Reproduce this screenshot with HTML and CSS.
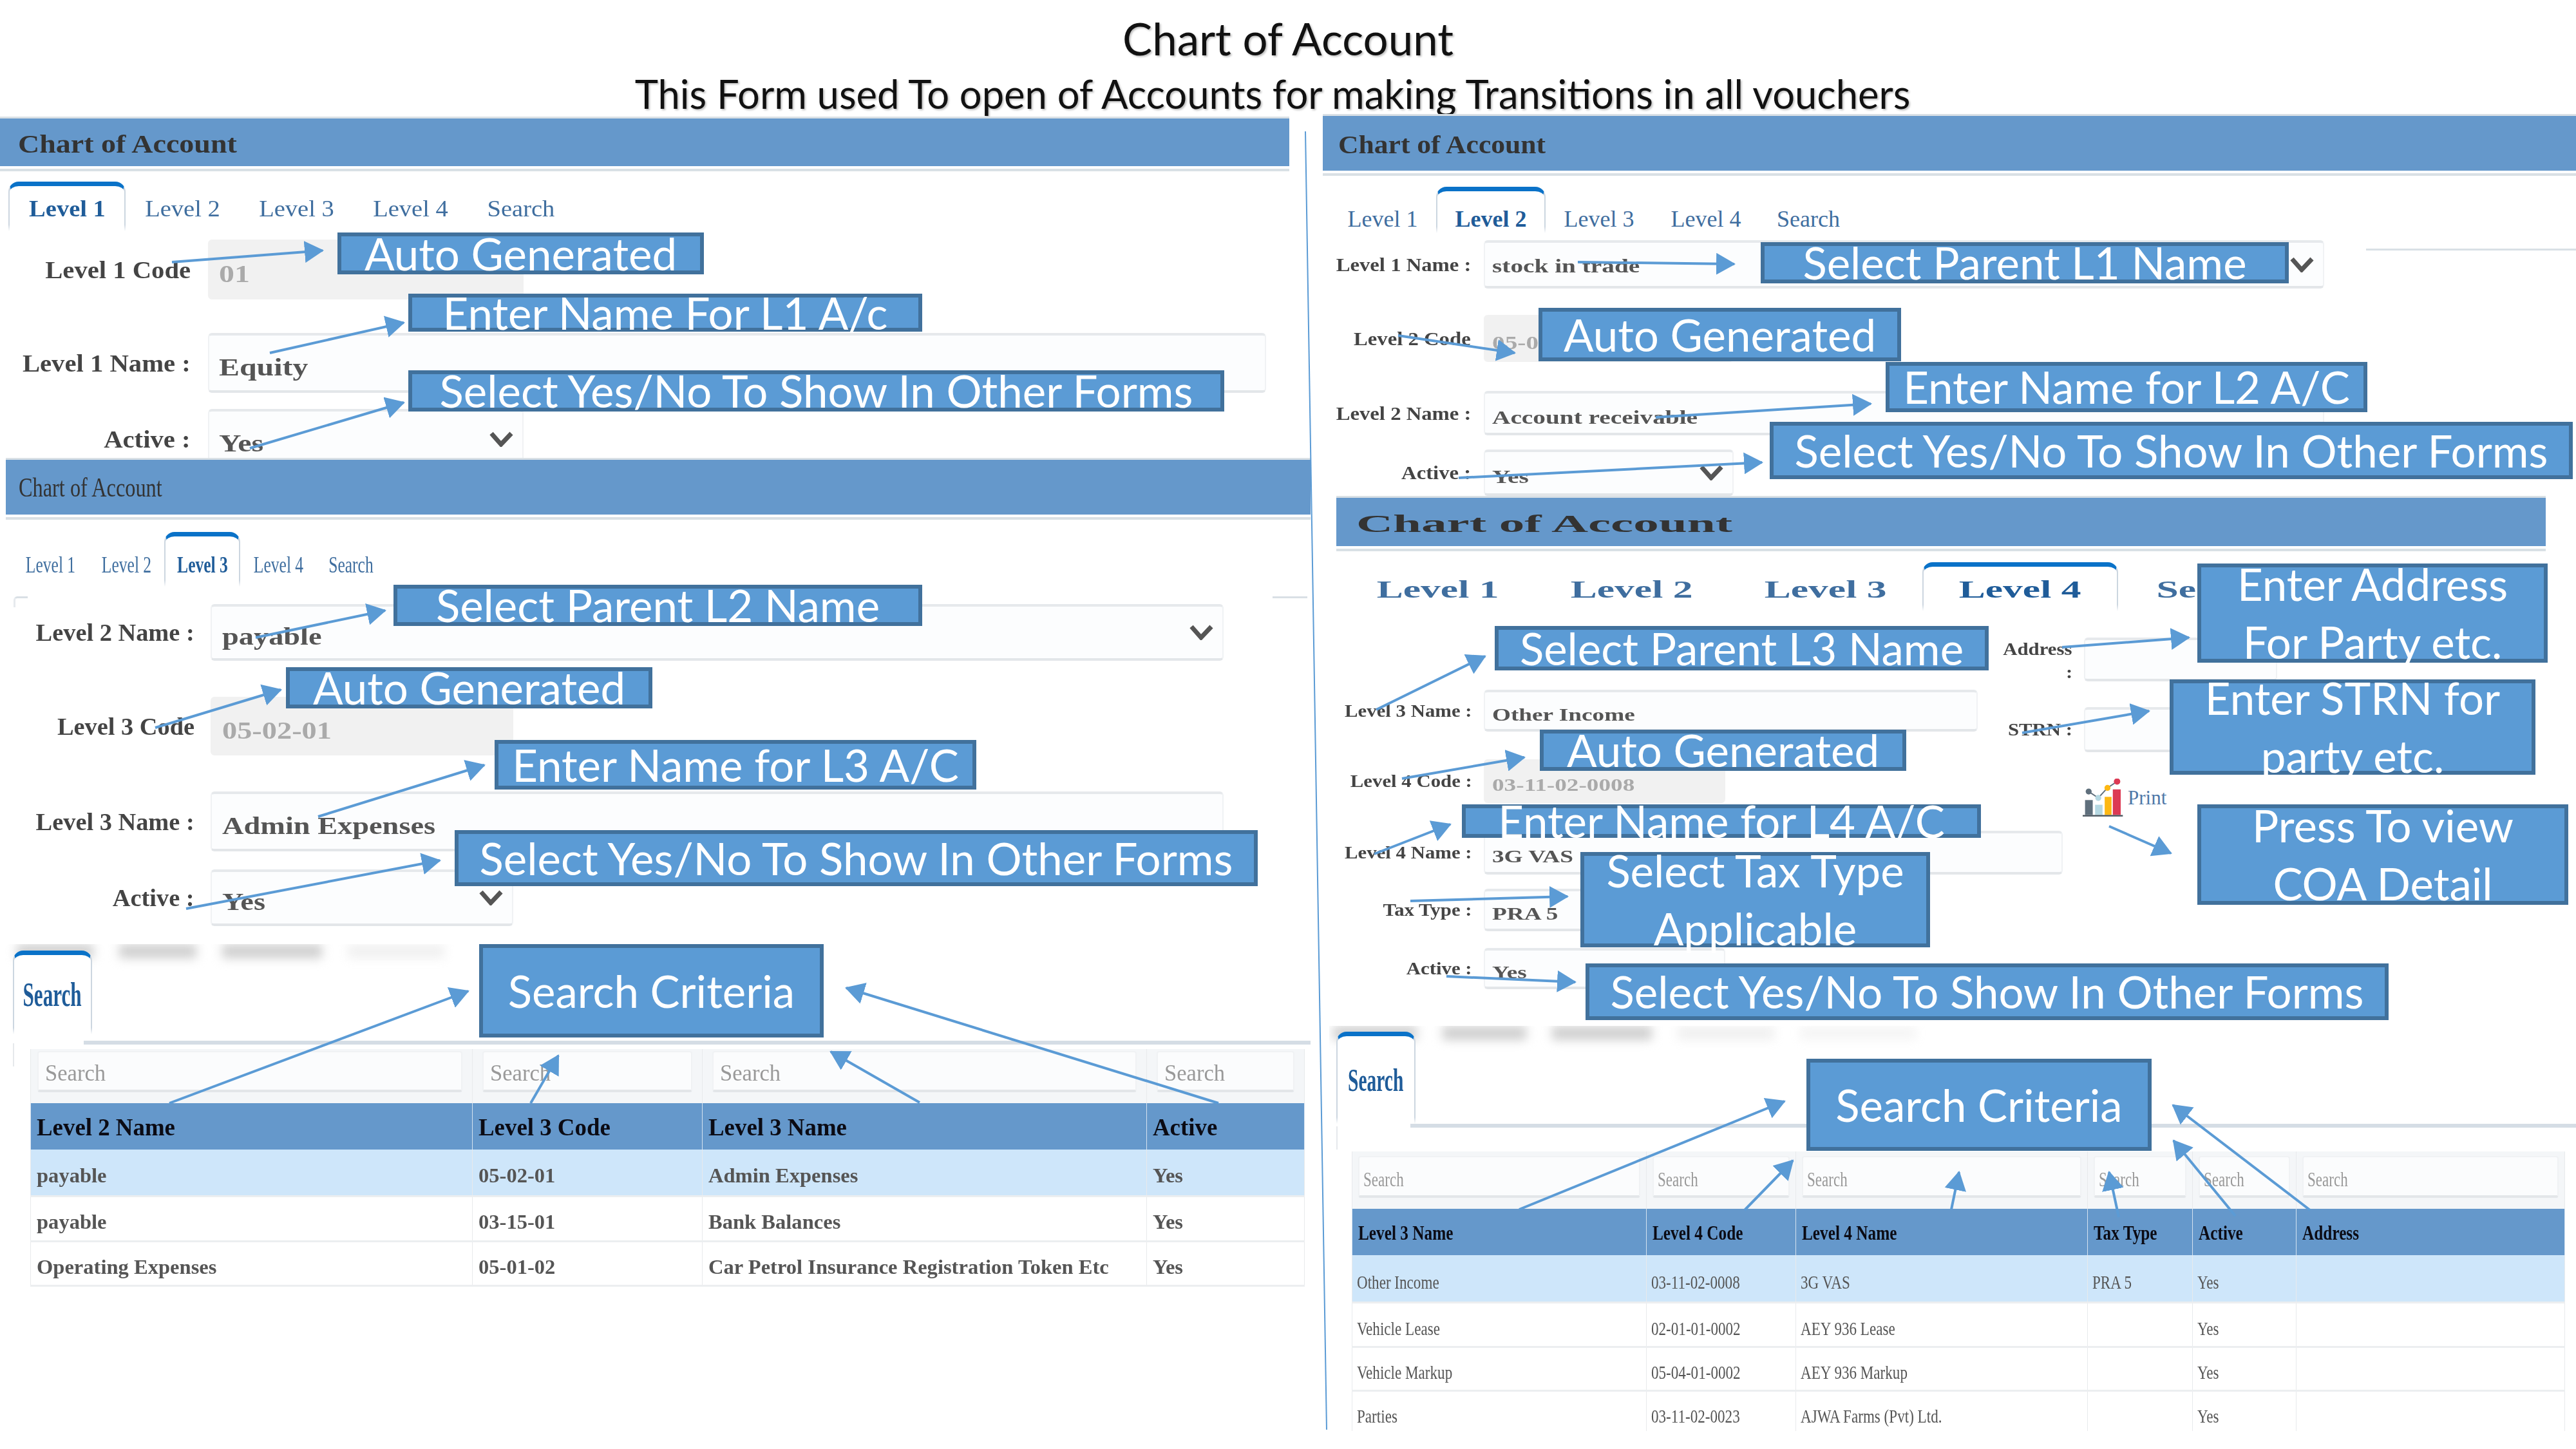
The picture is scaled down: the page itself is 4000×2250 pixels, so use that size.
FILE: index.html
```html
<!DOCTYPE html>
<html lang="en">

<head>
    <meta charset="UTF-8">
    <title>Chart of Account</title>
    <link rel="stylesheet" href="styles.css">
</head>

<body>
    <div id="slide">
        <header id="slideTitle">
            <div class="title-main">Chart of Account</div>
            <div class="title-sub">This Form used To open of Accounts for making Transitions in all vouchers</div>
        </header>

        <!-- level 1 -->
        <section class="shot shot-a">
            <div class="band"><span class="t">Chart of Account</span></div>
            <div class="tabs">
                <div class="tab active"><span class="t">Level 1</span></div>
                <div class="tab"><span class="t">Level 2</span></div>
                <div class="tab"><span class="t">Level 3</span></div>
                <div class="tab"><span class="t">Level 4</span></div>
                <div class="tab"><span class="t">Search</span></div>
            </div>
            <div class="form">
                <div class="row">
                    <label><span class="t">Level 1 Code</span></label>
                    <div class="field off short"><span class="t">01</span></div>
                </div>
                <div class="row">
                    <label><span class="t">Level 1 Name :</span></label>
                    <div class="field wide"><span class="t">Equity</span></div>
                </div>
                <div class="row">
                    <label><span class="t">Active :</span></label>
                    <div class="field short"><span class="t">Yes</span>
                        <svg class="chev" viewBox="0 0 37 24"><path d="M3 3 18 20 34 3" /></svg>
                    </div>
                </div>
            </div>
        </section>

        <!-- level 3 -->
        <section class="shot shot-b">
            <div class="band"><span class="t">Chart of Account</span></div>
            <div class="tabs">
                <div class="tab"><span class="t">Level 1</span></div>
                <div class="tab"><span class="t">Level 2</span></div>
                <div class="tab active"><span class="t">Level 3</span></div>
                <div class="tab"><span class="t">Level 4</span></div>
                <div class="tab"><span class="t">Search</span></div>
            </div>
            <div class="form">
                <div class="row">
                    <label><span class="t">Level 2 Name :</span></label>
                    <div class="field wide"><span class="t">payable</span>
                        <svg class="chev" viewBox="0 0 37 24"><path d="M3 3 18 20 34 3" /></svg>
                    </div>
                </div>
                <div class="row">
                    <label><span class="t">Level 3 Code</span></label>
                    <div class="field off short"><span class="t">05-02-01</span></div>
                </div>
                <div class="row">
                    <label><span class="t">Level 3 Name :</span></label>
                    <div class="field wide"><span class="t">Admin Expenses</span></div>
                </div>
                <div class="row">
                    <label><span class="t">Active :</span></label>
                    <div class="field short"><span class="t">Yes</span>
                        <svg class="chev" viewBox="0 0 37 24"><path d="M3 3 18 20 34 3" /></svg>
                    </div>
                </div>
            </div>
        </section>

        <!-- search for level 3 -->
        <section class="shot shot-c">
            <div class="smudges"><i></i><i></i><i></i><i></i></div>
            <div class="tab active search-tab"><span class="t">Search</span></div>
            <div class="rule"></div>
            <table class="grid">
                <colgroup>
                    <col class="c1"><col class="c2"><col class="c3"><col class="c4">
                </colgroup>
                <tr class="filters">
                    <td><div class="find"><span class="t">Search</span></div></td>
                    <td><div class="find"><span class="t">Search</span></div></td>
                    <td><div class="find"><span class="t">Search</span></div></td>
                    <td><div class="find"><span class="t">Search</span></div></td>
                </tr>
                <tr class="head">
                    <th><span class="t">Level 2 Name</span></th>
                    <th><span class="t">Level 3 Code</span></th>
                    <th><span class="t">Level 3 Name</span></th>
                    <th><span class="t">Active</span></th>
                </tr>
                <tr class="sel r1">
                    <td><span class="t">payable</span></td>
                    <td><span class="t">05-02-01</span></td>
                    <td><span class="t">Admin Expenses</span></td>
                    <td><span class="t">Yes</span></td>
                </tr>
                <tr class="r2">
                    <td><span class="t">payable</span></td>
                    <td><span class="t">03-15-01</span></td>
                    <td><span class="t">Bank Balances</span></td>
                    <td><span class="t">Yes</span></td>
                </tr>
                <tr class="r3">
                    <td><span class="t">Operating Expenses</span></td>
                    <td><span class="t">05-01-02</span></td>
                    <td><span class="t">Car Petrol Insurance Registration Token Etc</span></td>
                    <td><span class="t">Yes</span></td>
                </tr>
            </table>
        </section>

        <!-- level 2 -->
        <section class="shot shot-d">
            <div class="band"><span class="t">Chart of Account</span></div>
            <div class="tabs">
                <div class="tab"><span class="t">Level 1</span></div>
                <div class="tab active"><span class="t">Level 2</span></div>
                <div class="tab"><span class="t">Level 3</span></div>
                <div class="tab"><span class="t">Level 4</span></div>
                <div class="tab"><span class="t">Search</span></div>
            </div>
            <div class="form">
                <div class="row">
                    <label><span class="t">Level 1 Name :</span></label>
                    <div class="field wide"><span class="t">stock in trade</span>
                        <svg class="chev" viewBox="0 0 37 24"><path d="M3 3 18 20 34 3" /></svg>
                    </div>
                </div>
                <div class="row">
                    <label><span class="t">Level 2 Code</span></label>
                    <div class="field off short"><span class="t">05-01</span></div>
                </div>
                <div class="row">
                    <label><span class="t">Level 2 Name :</span></label>
                    <div class="field wide"><span class="t">Account receivable</span></div>
                </div>
                <div class="row">
                    <label><span class="t">Active :</span></label>
                    <div class="field short"><span class="t">Yes</span>
                        <svg class="chev" viewBox="0 0 37 24"><path d="M3 3 18 20 34 3" /></svg>
                    </div>
                </div>
            </div>
            <div class="stray-rule"></div>
        </section>

        <!-- level 4 -->
        <section class="shot shot-e">
            <div class="band"><span class="t">Chart of Account</span></div>
            <div class="tabs">
                <div class="tab"><span class="t">Level 1</span></div>
                <div class="tab"><span class="t">Level 2</span></div>
                <div class="tab"><span class="t">Level 3</span></div>
                <div class="tab active"><span class="t">Level 4</span></div>
                <div class="tab"><span class="t">Search</span></div>
            </div>
            <div class="columns">
                <div class="form">
                    <div class="row">
                        <label><span class="t">Level 3 Name :</span></label>
                        <div class="field f-l3"><span class="t">Other Income</span></div>
                    </div>
                    <div class="row">
                        <label><span class="t">Level 4 Code :</span></label>
                        <div class="field off short"><span class="t">03-11-02-0008</span></div>
                    </div>
                    <div class="row">
                        <label><span class="t">Level 4 Name :</span></label>
                        <div class="field f-l4"><span class="t">3G VAS</span></div>
                    </div>
                    <div class="row">
                        <label><span class="t">Tax Type :</span></label>
                        <div class="field short"><span class="t">PRA 5</span></div>
                    </div>
                    <div class="row">
                        <label><span class="t">Active :</span></label>
                        <div class="field short"><span class="t">Yes</span></div>
                    </div>
                </div>
                <div class="form side">
                    <div class="row">
                        <label class="stack"><span class="t">Address</span><span class="t">:</span></label>
                        <div class="field"></div>
                    </div>
                    <div class="row">
                        <label><span class="t">STRN :</span></label>
                        <div class="field"></div>
                    </div>
                    <div class="print">
                        <svg class="print-icon" viewBox="97 60 190 180">
                            <rect x="108" y="160" width="36" height="70" fill="#5f6f7c" />
                            <rect x="155" y="182" width="35" height="48" fill="#b5d8e2" />
                            <rect x="200" y="145" width="32" height="85" fill="#fdb813" />
                            <rect x="238" y="110" width="37" height="120" fill="#dc3a54" />
                            <rect x="97" y="230" width="188" height="7" fill="#46525c" />
                            <path d="M125 120 170 150 213 103 258 73" fill="none" stroke="#5f6f7c" stroke-width="6" />
                            <circle cx="125" cy="120" r="14" fill="#5f6f7c" />
                            <circle cx="170" cy="150" r="14" fill="#b5d8e2" />
                            <circle cx="213" cy="103" r="14" fill="#fdb813" />
                            <circle cx="258" cy="73" r="15" fill="#dc3a54" />
                        </svg>
                        <span class="t">Print</span>
                    </div>
                </div>
            </div>
        </section>

        <!-- search for level 4 -->
        <section class="shot shot-f">
            <div class="smudges"><i></i><i></i><i></i><i></i><i></i></div>
            <div class="tab active search-tab"><span class="t">Search</span></div>
            <div class="rule"></div>
            <table class="grid">
                <colgroup>
                    <col class="c1"><col class="c2"><col class="c3"><col class="c4"><col class="c5"><col class="c6">
                </colgroup>
                <tr class="filters">
                    <td><div class="find"><span class="t">Search</span></div></td>
                    <td><div class="find"><span class="t">Search</span></div></td>
                    <td><div class="find"><span class="t">Search</span></div></td>
                    <td><div class="find"><span class="t">Search</span></div></td>
                    <td><div class="find"><span class="t">Search</span></div></td>
                    <td><div class="find"><span class="t">Search</span></div></td>
                </tr>
                <tr class="head">
                    <th><span class="t">Level 3 Name</span></th>
                    <th><span class="t">Level 4 Code</span></th>
                    <th><span class="t">Level 4 Name</span></th>
                    <th><span class="t">Tax Type</span></th>
                    <th><span class="t">Active</span></th>
                    <th><span class="t">Address</span></th>
                </tr>
                <tr class="sel r1">
                    <td><span class="t">Other Income</span></td>
                    <td><span class="t">03-11-02-0008</span></td>
                    <td><span class="t">3G VAS</span></td>
                    <td><span class="t">PRA 5</span></td>
                    <td><span class="t">Yes</span></td>
                    <td></td>
                </tr>
                <tr class="r2">
                    <td><span class="t">Vehicle Lease</span></td>
                    <td><span class="t">02-01-01-0002</span></td>
                    <td><span class="t">AEY 936 Lease</span></td>
                    <td></td>
                    <td><span class="t">Yes</span></td>
                    <td></td>
                </tr>
                <tr class="r3">
                    <td><span class="t">Vehicle Markup</span></td>
                    <td><span class="t">05-04-01-0002</span></td>
                    <td><span class="t">AEY 936 Markup</span></td>
                    <td></td>
                    <td><span class="t">Yes</span></td>
                    <td></td>
                </tr>
                <tr class="r4">
                    <td><span class="t">Parties</span></td>
                    <td><span class="t">03-11-02-0023</span></td>
                    <td><span class="t">AJWA Farms (Pvt) Ltd.</span></td>
                    <td></td>
                    <td><span class="t">Yes</span></td>
                    <td></td>
                </tr>
            </table>
        </section>

        <!-- callouts left -->
        <div class="note n-a1">Auto Generated</div>
        <div class="note n-a2">Enter Name For L1 A/c</div>
        <div class="note n-a3">Select Yes/No To Show In Other Forms</div>
        <div class="note n-b1">Select Parent L2 Name</div>
        <div class="note n-b2">Auto Generated</div>
        <div class="note n-b3">Enter Name for L3 A/C</div>
        <div class="note n-b4">Select Yes/No To Show In Other Forms</div>
        <div class="note n-c1">Search Criteria</div>

        <!-- callouts right -->
        <div class="note n-d1">Select Parent L1 Name</div>
        <div class="note n-d2">Auto Generated</div>
        <div class="note n-d3">Enter Name for L2 A/C</div>
        <div class="note n-d4">Select Yes/No To Show In Other Forms</div>
        <div class="note n-e1">Select Parent L3 Name</div>
        <div class="note n-e2">Auto Generated</div>
        <div class="note n-e3">Enter Name for L4 A/C</div>
        <div class="note n-e4">Select Tax Type<br>Applicable</div>
        <div class="note n-e5">Select Yes/No To Show In Other Forms</div>
        <div class="note n-e6">Enter Address<br>For Party etc.</div>
        <div class="note n-e7">Enter STRN for<br>party etc.</div>
        <div class="note n-e8">Press To view<br>COA Detail</div>
        <div class="note n-f1">Search Criteria</div>

        <svg id="arrows" viewBox="0 0 4000 2250">
            <defs>
                <marker id="head" markerUnits="userSpaceOnUse" markerWidth="30" markerHeight="34" refX="28" refY="17" orient="auto">
                    <path d="M0 0 30 17 0 34z" fill="#5b9bd5" />
                </marker>
            </defs>
            <path class="divider" d="M2027 204 2060 2220" />
            <g class="arrow">
                <path d="M267 407 501 389" />
                <path d="M419 548 627 501" />
                <path d="M388 696 627 625" />
                <path d="M397 990 598 948" />
                <path d="M241 1130 436 1071" />
                <path d="M494 1268 752 1188" />
                <path d="M289 1411 683 1336" />
                <path d="M263 1713 727 1539" />
                <path d="M824 1713 867 1639" />
                <path d="M1428 1712 1290 1633" />
                <path d="M1892 1713 1314 1534" />
                <path d="M2450 407 2693 410" />
                <path d="M2171 521 2352 548" />
                <path d="M2571 648 2905 627" />
                <path d="M2265 742 2736 718" />
                <path d="M2137 1102 2306 1019" />
                <path d="M2177 1209 2367 1176" />
                <path d="M2134 1326 2252 1280" />
                <path d="M2190 1399 2434 1392" />
                <path d="M2246 1516 2446 1525" />
                <path d="M3202 1005 3399 990" />
                <path d="M3140 1138 3337 1104" />
                <path d="M3275 1283 3371 1325" />
                <path d="M2359 1878 2771 1710" />
                <path d="M2709 1879 2784 1802" />
                <path d="M3030 1878 3042 1820" />
                <path d="M3290 1890 3275 1820" />
                <path d="M3471 1888 3375 1771" />
                <path d="M3587 1879 3374 1716" />
            </g>
        </svg>
    </div>
</body>

</html>
```

FILE: styles.css
```css
body {
    margin: 0;
    background-color: #fff;
}

#slide {
    position: relative;
    width: 4000px;
    height: 2250px;
    overflow: hidden;
    background-color: #fff;
    font-family: "Liberation Serif", serif;
}

#slideTitle {
    display: flex;
    flex-direction: column;
    align-items: center;
    padding-top: 20px;
    font-family: Lato, sans-serif;
    color: #111;
    text-shadow: 2px 2px 3px rgba(0, 0, 0, 0.25);
}

.title-main {
    font-size: 69px;
    line-height: 80px;
}

.title-sub {
    margin-right: 48px;
    font-size: 61.5px;
    line-height: 90px;
}

/* pasted screenshots, every one stretched by its own amount */
.shot {
    position: absolute;
    overflow: hidden;
    background-color: #fff;
    color: #555;
}

.shot-a { left: 0; top: 181px; width: 2002px; height: 533px; }
.shot-b { left: 9px; top: 711px; width: 2026px; height: 750px; }
.shot-c { left: 0; top: 1466px; width: 2040px; height: 540px; }
.shot-d { left: 2054px; top: 177px; width: 1946px; height: 593px; }
.shot-e { left: 2075px; top: 770px; width: 1878px; height: 790px; }
.shot-f { left: 2064px; top: 1593px; width: 1936px; height: 629px; }

.shot-e { overflow: visible; background-color: transparent; }

.t {
    display: inline-block;
    white-space: nowrap;
    transform-origin: left center;
    transform: scaleX(var(--sx, 1));
}

.band {
    display: flex;
    align-items: center;
    box-sizing: border-box;
    margin-top: 3px;
    padding-top: 4px;
    background-color: #6598cb;
    box-shadow: 0 -3px 0 #d9e0e5, 0 4px 0 #fff, 0 8px 0 #d9e0e5;
    color: #333;
    font-weight: bold;
}

.shot-a .band { height: 74px; padding-left: 28px; font-size: 40px; --sx: 1.15; }
.shot-b .band { height: 85px; padding-top: 0; padding-left: 20px; font-size: 42px; font-weight: normal; --sx: 0.77; }
.shot-d .band { height: 85px; padding-left: 24px; font-size: 40px; --sx: 1.09; }
.shot-e .band { height: 75px; padding-left: 31px; font-size: 38px; --sx: 2.08; }

.tabs {
    display: flex;
    align-items: flex-start;
}

.tab {
    position: relative;
    display: flex;
    align-items: center;
    justify-content: center;
    flex-shrink: 0;
    box-sizing: border-box;
    border-top: 7px solid transparent;
    color: #3f6e9f;
}

.tab .t {
    transform-origin: center;
}

.tab.active {
    border-top-color: #0a72c8;
    border-left: 2px solid #ccd6e0;
    border-right: 2px solid #ccd6e0;
    border-radius: 16px 16px 0 0;
    color: #1f5c99;
    font-weight: bold;
}

/* side borders of the open tab fade out */
.tab.active::after {
    content: "";
    position: absolute;
    left: -2px;
    right: -2px;
    bottom: 0;
    height: 10px;
    background: linear-gradient(rgba(255, 255, 255, 0), #fff);
}

.shot-a .tabs { margin: 24px 0 0 13px; height: 77px; font-size: 36px; --sx: 1.07; }
.shot-a .tab { width: 177px; height: 77px; }
.shot-a .tab.active { width: 182px; }
.shot-a .tab:last-child { margin-left: -6px; }

.shot-b .tabs { margin: 27px 0 0 10px; height: 85px; font-size: 36px; --sx: 0.71; }
.shot-b .tab { width: 118px; height: 85px; padding-top: 9px; }
.shot-b .tab:last-child { margin-left: -5px; }

.shot-d .tabs { margin: 25px 0 0 10px; height: 72px; font-size: 36px; --sx: 1; }
.shot-d .tab { width: 166px; height: 72px; padding-top: 21px; }
.shot-d .tab.active { width: 170px; }
.shot-d .tab:last-child { margin-left: -7px; }

.shot-e .tabs { margin: 25px 0 0 7px; height: 76px; font-size: 38px; font-weight: bold; --sx: 1.62; color: #4a82b8; }
.shot-e .tab { width: 301px; height: 76px; }
.shot-e .tab.active { width: 304px; }
.shot-e .tab:last-child { width: 300px; }

.row {
    display: flex;
    align-items: center;
}

.row label {
    flex-shrink: 0;
    font-weight: bold;
    color: #444;
    text-align: right;
}

.row label .t {
    transform-origin: right center;
}

.field {
    display: flex;
    align-items: center;
    justify-content: space-between;
    flex-shrink: 0;
    box-sizing: border-box;
    height: 100%;
    background-color: #fcfdfe;
    border: 2px solid #f0f2f4;
    border-top: 4px solid #e6e9ec;
    border-bottom: 4px solid #e3e6e9;
    border-radius: 6px;
    font-weight: bold;
    color: #555;
}

.field > .t {
    position: relative;
    top: 6px;
    --sx: var(--sv);
}

.field.off {
    background-color: #f1f1f1;
    border-color: #f1f1f1;
    color: #aaa;
}

.chev {
    flex-shrink: 0;
    width: 37px;
    height: 24px;
    margin-right: 14px;
    fill: none;
    stroke: #555;
    stroke-width: 7;
}

/* shot a */
.shot-a .form { margin-top: 13px; font-size: 38px; --sx: 1.07; --sv: 1.26; }
.shot-a label { width: 296px; margin-right: 27px; }
.shot-a .field { padding-left: 15px; }
.shot-a .wide { width: 1643px; }
.shot-a .short { width: 490px; }
.shot-a .row { height: 93px; }
.shot-a .row:nth-child(2) { margin-top: 52px; }
.shot-a .row:nth-child(3) { margin-top: 25px; }

/* shot b */
.shot-b .form { position: relative; margin-top: 27px; font-size: 38px; --sx: 1.01; --sv: 1.22; }
.shot-b label { width: 293px; margin-right: 25px; }
.shot-b .field { padding-left: 16px; }
.shot-b .wide { width: 1573px; }
.shot-b .short { width: 470px; }
.shot-b .row:nth-child(1) { height: 88px; }
.shot-b .row:nth-child(2) { height: 91px; margin-top: 56px; }
.shot-b .row:nth-child(3) { height: 93px; margin-top: 56px; }
.shot-b .row:nth-child(4) { height: 88px; margin-top: 28px; }

/* bits of the box frame that stick out behind the form */
.shot-b .form::before {
    content: "";
    position: absolute;
    left: 12px;
    top: -12px;
    width: 19px;
    height: 14px;
    border-top: 3px solid #d9e0e5;
    border-left: 3px solid #e6eaee;
    border-radius: 6px 0 0 0;
}

.shot-b .form::after {
    content: "";
    position: absolute;
    left: 1967px;
    top: -12px;
    width: 54px;
    height: 3px;
    background-color: #d9e0e5;
}

/* shot d */
.shot-d .form { margin-top: 11px; font-size: 30px; --sx: 1.09; --sv: 1.31; }
.shot-d label { width: 230px; margin-right: 20px; }
.shot-d .field { padding-left: 11px; }
.shot-d .wide { width: 1305px; }
.shot-d .short { width: 388px; }
.shot-d .row:nth-child(1) { height: 75px; }
.shot-d .row:nth-child(2) { height: 73px; margin-top: 41px; }
.shot-d .row:nth-child(3) { height: 69px; margin-top: 45px; }
.shot-d .row:nth-child(4) { height: 72px; margin-top: 22px; }
.shot-d .row:nth-child(1) .t { top: 2px; }
.shot-d .row:nth-child(1) label .t { top: 0; }

.stray-rule {
    position: absolute;
    left: 1620px;
    top: 209px;
    width: 326px;
    height: 3px;
    background-color: #d9e0e5;
}

/* shot e */
.columns {
    display: flex;
    font-size: 28px;
    --sx: 1.1;
    --sv: 1.33;
}

.shot-e .form { width: 1025px; margin-top: 122px; }
.shot-e label { width: 211px; margin-right: 18px; }
.shot-e .field { padding-left: 11px; }
.shot-e .short { width: 375px; }
.f-l3 { width: 767px; }
.f-l4 { width: 899px; }
.shot-e .form > .row:nth-child(1) { height: 65px; }
.shot-e .form > .row:nth-child(2) { height: 68px; margin-top: 43px; }
.shot-e .form > .row:nth-child(3) { height: 68px; margin-top: 43px; }
.shot-e .form > .row:nth-child(4) { height: 66px; margin-top: 22px; }
.shot-e .form > .row:nth-child(5) { height: 64px; margin-top: 26px; }

.shot-e .side { width: 700px; margin-top: 41px; }
.side label { width: 118px; }
.side .field { width: 300px; }
.shot-e .side > .row:nth-child(1) { height: 68px; }
.shot-e .side > .row:nth-child(2) { height: 70px; margin-top: 40px; }

.stack {
    display: flex;
    flex-direction: column;
    align-items: flex-end;
    align-self: flex-start;
    line-height: 36px;
}

.print {
    display: flex;
    align-items: center;
    gap: 7px;
    margin: 41px 0 0 134px;
    color: #4f78a8;
    --sx: 1;
    font-size: 31px;
}

.print-icon {
    width: 63px;
    height: 60px;
}

/* search shots */
.smudges {
    display: flex;
    gap: 40px;
    height: 24px;
}

.smudges i {
    display: block;
    height: 22px;
    background-color: #cfcfcf;
    filter: blur(8px);
}

.shot-c .smudges { margin-left: 26px; }
.shot-c .smudges i:nth-child(1) { width: 119px; }
.shot-c .smudges i:nth-child(2) { width: 120px; }
.shot-c .smudges i:nth-child(3) { width: 155px; }
.shot-c .smudges i:nth-child(4) { width: 150px; opacity: 0.3; }

.shot-f .smudges { margin-left: 6px; height: 27px; }
.shot-f .smudges i:nth-child(1) { width: 130px; }
.shot-f .smudges i:nth-child(2) { width: 130px; }
.shot-f .smudges i:nth-child(3) { width: 155px; }
.shot-f .smudges i:nth-child(4) { width: 150px; opacity: 0.3; }
.shot-f .smudges i:nth-child(5) { width: 180px; opacity: 0.2; }

.search-tab {
    background-color: #fff;
    color: #1a5a9f;
}

.shot-c .search-tab { width: 123px; height: 130px; margin: -14px 0 0 20px; font-size: 52px; --sx: 0.6; }
.shot-f .search-tab { width: 123px; height: 143px; margin: -18px 0 0 11px; font-size: 50px; --sx: 0.59; }

.rule {
    position: relative;
    height: 6px;
    background-color: #d5dde5;
}

/* left stub of the frame under the search tab */
.rule::before {
    content: "";
    position: absolute;
    top: 4px;
    width: 2px;
    height: 36px;
    background-color: #e6e9ec;
}

.shot-c .rule::before { left: -110px; }
.shot-f .rule::before { left: -115px; }

.shot-c .rule { width: 1905px; margin: 10px 0 0 130px; }
.shot-f .rule { width: 1810px; margin: 0 0 0 126px; }

.grid {
    table-layout: fixed;
    border-collapse: collapse;
}

.shot-c .grid { width: 1978px; margin: 7px 0 0 47px; }
.shot-f .grid { width: 1883px; margin: 37px 0 0 35px; }

.shot-c .c1 { width: 686px; }
.shot-c .c2 { width: 357px; }
.shot-c .c3 { width: 690px; }
.shot-c .c4 { width: 245px; }

.shot-f .c1 { width: 457px; }
.shot-f .c2 { width: 232px; }
.shot-f .c3 { width: 453px; }
.shot-f .c4 { width: 163px; }
.shot-f .c5 { width: 161px; }
.shot-f .c6 { width: 417px; }

.grid td,
.grid th {
    padding: 12px 0 0 9px;
    text-align: left;
    white-space: nowrap;
    border-left: 1px solid #e8eaec;
    border-right: 1px solid #e8eaec;
    border-bottom: 3px solid #eceef0;
}

.shot-f .grid td { padding-left: 7px; }

.grid .head th {
    padding-top: 2px;
    background-color: #6598cb;
    color: #0b0b14;
    font-weight: bold;
    border-bottom: none;
    border-left-color: #d5e2ef;
    border-right-color: #d5e2ef;
}

.grid .sel td {
    background-color: #cee6fa;
}

.grid .filters td {
    background-color: #f4f6f8;
    border-bottom: none;
    vertical-align: top;
}

.find {
    box-sizing: border-box;
    display: flex;
    align-items: center;
    background-color: #fbfcfd;
    border: 2px solid #f0f2f4;
    border-bottom: 4px solid #e3e6e9;
    border-radius: 4px;
    color: #999;
}

.shot-c .grid .filters td { padding: 3px 15px 0 15px; }
.shot-c .grid .filters td:first-child { padding-left: 10px; }
.shot-c .find { height: 64px; padding: 5px 0 0 10px; font-size: 36px; --sx: 0.96; }
.shot-c .filters { height: 84px; }
.shot-c .head { height: 72px; font-size: 38px; }
.shot-c .head .t { --sx: 0.97; }
.shot-c .r1 { height: 72px; }
.shot-c .r2 { height: 70px; }
.shot-c .r3 { height: 69px; }
.shot-c .r1,
.shot-c .r2,
.shot-c .r3 { font-size: 31px; font-weight: bold; --sx: 1.05; }

.shot-f .grid .filters td { padding: 7px 9px 0 9px; }
.shot-f .find { height: 65px; padding: 10px 0 0 6px; font-size: 32px; --sx: 0.72; }
.shot-f .filters { height: 89px; }
.shot-f .head { height: 72px; font-size: 32px; --sx: 0.79; }
.shot-f .r1 { height: 73px; }
.shot-f .r2 { height: 69px; }
.shot-f .r3 { height: 68px; }
.shot-f .r4 { height: 68px; }
.shot-f .r1,
.shot-f .r2,
.shot-f .r3,
.shot-f .r4 { font-size: 30px; color: #555; --sx: 0.77; }

/* slide callouts */
.note {
    position: absolute;
    box-sizing: border-box;
    display: flex;
    align-items: center;
    justify-content: center;
    text-align: center;
    background-color: #5b9bd5;
    border: 6px solid #41719c;
    color: #fff;
    font-family: Lato, sans-serif;
    font-size: 69px;
    line-height: 90px;
    white-space: nowrap;
}

.n-a1 { left: 524px; top: 361px; width: 569px; height: 65px; }
.n-a2 { left: 634px; top: 456px; width: 798px; height: 59px; }
.n-a3 { left: 634px; top: 575px; width: 1267px; height: 64px; }
.n-b1 { left: 611px; top: 908px; width: 821px; height: 64px; }
.n-b2 { left: 444px; top: 1036px; width: 569px; height: 64px; }
.n-b3 { left: 768px; top: 1149px; width: 748px; height: 77px; }
.n-b4 { left: 706px; top: 1289px; width: 1247px; height: 87px; }
.n-c1 { left: 744px; top: 1466px; width: 535px; height: 145px; }
.n-d1 { left: 2734px; top: 376px; width: 820px; height: 64px; }
.n-d2 { left: 2389px; top: 478px; width: 563px; height: 83px; }
.n-d3 { left: 2928px; top: 562px; width: 748px; height: 78px; }
.n-d4 { left: 2748px; top: 655px; width: 1247px; height: 89px; }
.n-e1 { left: 2321px; top: 972px; width: 767px; height: 69px; }
.n-e2 { left: 2391px; top: 1133px; width: 569px; height: 64px; }
.n-e3 { left: 2270px; top: 1249px; width: 806px; height: 52px; }
.n-e4 { left: 2454px; top: 1323px; width: 543px; height: 148px; }
.n-e5 { left: 2462px; top: 1496px; width: 1247px; height: 88px; }
.n-e6 { left: 3412px; top: 875px; width: 544px; height: 154px; }
.n-e7 { left: 3369px; top: 1055px; width: 568px; height: 148px; }
.n-e8 { left: 3412px; top: 1249px; width: 576px; height: 156px; }
.n-f1 { left: 2805px; top: 1644px; width: 536px; height: 143px; }

#arrows {
    position: absolute;
    left: 0;
    top: 0;
    width: 4000px;
    height: 2250px;
    pointer-events: none;
}

.divider {
    fill: none;
    stroke: #5b9bd5;
    stroke-width: 2;
}

.arrow path {
    fill: none;
    stroke: #5b9bd5;
    stroke-width: 4;
    marker-end: url(#head);
}
```
